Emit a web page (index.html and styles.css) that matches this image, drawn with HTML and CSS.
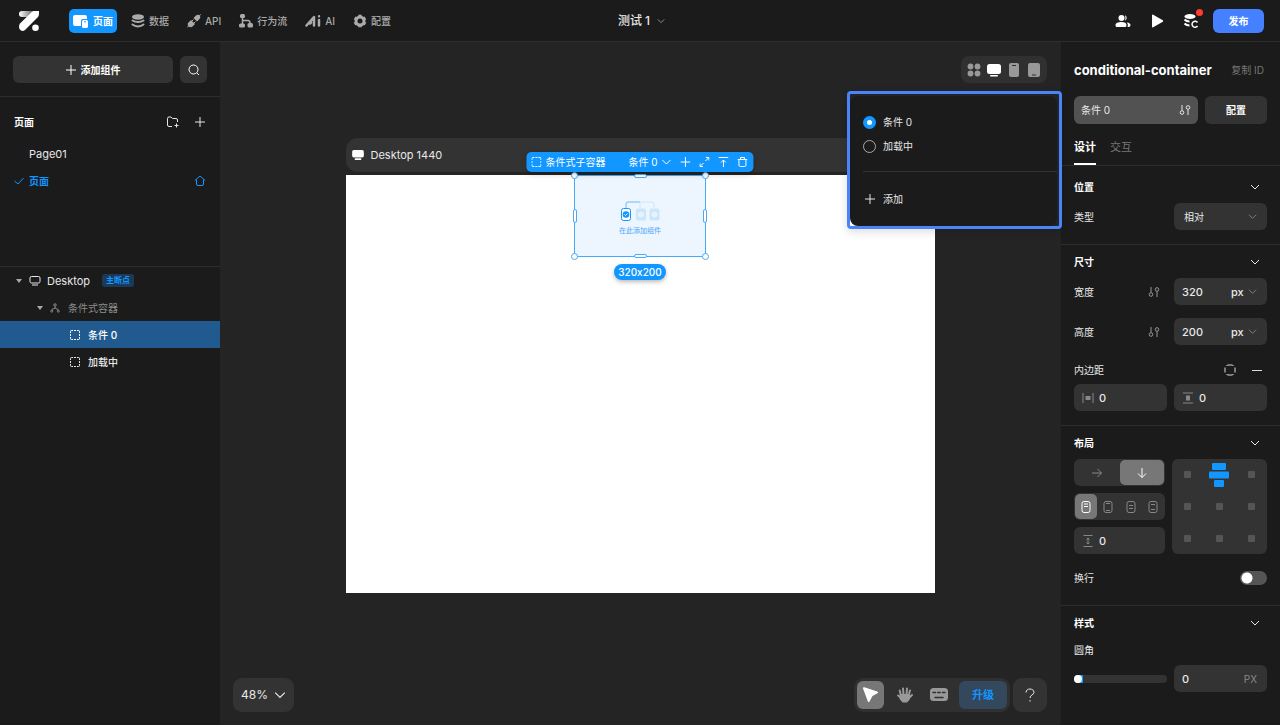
FILE: index.html
```html
<!DOCTYPE html>
<html lang="zh-CN">
<head>
<meta charset="utf-8">
<meta name="viewport" content="width=device-width, initial-scale=1">
<title>测试 1</title>
<link rel="stylesheet" href="styles.css">
</head>
<body>
<svg class="sprite" aria-hidden="true">
  <symbol id="chevron" viewBox="0 0 10 10"><path d="M1 3l4 4 4-4"/></symbol>
  <symbol id="plus" viewBox="0 0 10 10"><path d="M5 0v10M0 5h10"/></symbol>
  <symbol id="dashed" viewBox="0 0 10 10"><path d="M.5 3V1.5a1 1 0 0 1 1-1H3M4 .5h2M7 .5h1.500a1 1 0 0 1 1 1V3M9.500 4v2M9.500 7v1.500a1 1 0 0 1-1 1H7M6 9.500H4M3 9.500H1.500a1 1 0 0 1-1-1V7M.5 6V4"/></symbol>
  <symbol id="bind" viewBox="0 0 12 12"><path d="M3 1v5.500M9 11V5.500"/><circle cx="3" cy="8.500" r="1.800"/><circle cx="9" cy="3.500" r="1.800"/></symbol>
  <symbol id="monitor" viewBox="0 0 14 12"><rect x="0" y="0" width="14" height="9" rx="2"/><rect x="3" y="10" width="8" height="2" rx="1"/></symbol>
</svg>

<header class="topbar">
  <svg class="logo" viewBox="0 0 20 20" aria-label="Logo"><defs><linearGradient id="fade" gradientUnits="userSpaceOnUse" x1="0" y1="0" x2="14" y2="0"><stop offset="0" stop-color="#fff"/><stop offset="1" stop-color="#666"/></linearGradient></defs><rect width="18" height="6" rx="3" fill="url(#fade)"/><path d="M14.500 0H20v3q0 2-1.500 3.500L6 19q-2 1.500-4 .5T0 16t1-3.500L13 .800z" fill="#fff"/><circle cx="16.500" cy="16.700" r="3.300" fill="#fff"/></svg>
  <nav class="nav">
    <button class="nav-item active"><svg viewBox="0 0 16 14" width="16" height="14"><path d="M2 1h10a2 2 0 0 1 2 2v2h-4a2 2 0 0 0-2 2v5H2a2 2 0 0 1-2-2V3a2 2 0 0 1 2-2z" fill="#fff"/><rect x="9" y="6" width="6" height="8" rx="1.500" fill="#fff"/><path d="M11 7.800h2" stroke="#1296ff"/></svg>页面</button>
    <button class="nav-item"><svg viewBox="0 0 14 14" width="14" height="14"><ellipse cx="7" cy="3" rx="6" ry="2.700" fill="currentColor"/><path d="M1.500 6.500c3 2 8 2 11 0M1.500 10.500c3 2.500 8 2.500 11 0" fill="none" stroke="currentColor" stroke-width="2" stroke-linecap="round"/></svg>数据</button>
    <button class="nav-item"><svg viewBox="0 0 14 14" width="14" height="14" fill="currentColor"><path d="M1.500 8.500L4 6l4 4-2.500 2.500c-1 1-2.800.8-3.800 0L.5 13.500 0 13l1.300-1.200c-.8-1-.8-2.300.2-3.300zM6.500 4L9 1.500c1-1 2.500-.9 3.300-.2L13.500 0l.5.500-1.200 1.200c.7.800.7 2.300-.3 3.300L10 7.500z"/><path d="M5 7l1.500-1.500M7 9l1.500-1.500" stroke="currentColor"/></svg>API</button>
    <button class="nav-item"><svg viewBox="0 0 14 14" width="14" height="14" fill="currentColor"><rect x="1" y="0" width="5" height="4" rx="1.500"/><rect x="0" y="9.500" width="6" height="4" rx="1.500"/><rect x="8.500" y="9" width="5.500" height="4.500" rx="1.500"/><path d="M3.500 3v8M3.500 6.500h5.500q2 0 2 3" fill="none" stroke="currentColor" stroke-width="1.500"/></svg>行为流</button>
    <button class="nav-item"><svg viewBox="0 0 16 14" width="16" height="14" fill="none" stroke="currentColor" stroke-width="2.500" stroke-linecap="round" stroke-linejoin="round"><path d="M1.500 11.500L9 3v8.500M6 8.500l-1 1M14 6v5.500M14 2.200v.1"/></svg>AI</button>
    <button class="nav-item"><svg viewBox="0 0 14 14" width="14" height="14" fill="none" stroke="currentColor"><circle cx="7" cy="7" r="4" stroke-width="3"/><path d="M7 .8v3M7 10.200v3M1.600 3.900l2 1.200M12.400 3.900l-2 1.200M1.600 10.100l2-1.200M12.400 10.100l-2-1.200" stroke-width="3.400"/></svg>配置</button>
  </nav>
  <button class="project">测试 1<svg class="line" width="8" height="8"><use href="#chevron"/></svg></button>
  <div class="actions">
    <button class="icon-btn" aria-label="成员"><svg viewBox="0 0 16 14" width="16" height="14" fill="#fff"><circle cx="6.500" cy="4" r="3"/><path d="M10 1.300a3 3 0 0 1 0 5.400q1-2.700 0-5.400zM.5 11c0-2 2.500-3 6-3s5 1 5 3-1 2-2 2h-7c-1 0-2 0-2-2zM12 8.500q3.500.5 3.500 2.500t-2 2h-1q1-2 -.5-4.500z"/></svg></button>
    <button class="icon-btn" aria-label="预览"><svg viewBox="0 0 16 14" width="16" height="14" fill="#fff"><path d="M3 1.500q0-1.200 1.200-.8l9.600 5.500q1 .8 0 1.600L4.200 13.300q-1.200.4-1.200-.8z"/></svg></button>
    <button class="icon-btn sync" aria-label="同步"><svg viewBox="0 0 16 16" width="16" height="16" fill="none" stroke="#fff" stroke-width="2"><ellipse cx="7" cy="3.500" rx="5.500" ry="2.500" fill="#fff" stroke="none"/><path d="M1.500 6.500q2 2 5 2M1.500 10.500q2 2 5 2"/><path d="M14.500 9.500a3 3 0 1 0 0 3.500" stroke-width="1.500"/></svg><span class="dot"></span></button>
    <button class="publish">发布</button>
  </div>
</header>

<main class="workspace">
  <aside class="sidebar">
    <div class="add-row">
      <button class="add"><svg class="line" width="10" height="10"><use href="#plus"/></svg>添加组件</button>
      <button class="square" aria-label="搜索"><svg class="line" viewBox="0 0 12 12" width="12" height="12"><circle cx="5.500" cy="5.500" r="4.500"/><path d="M9 9l2 2"/></svg></button>
    </div>
    <section class="pages">
      <div class="pages-head"><h2>页面</h2>
        <button class="icon-btn" aria-label="新建文件夹"><svg class="line" viewBox="0 0 12 12" width="12" height="12"><path d="M5 10.500H2a1.500 1.500 0 0 1-1.500-1.500V2.500A1.500 1.500 0 0 1 2 1h2l1.500 1.500H9A1.500 1.500 0 0 1 10.500 4v2M9.500 7.500v4M7.500 9.500h4"/></svg></button>
        <button class="icon-btn" aria-label="新建页面"><svg class="line" width="10" height="10"><use href="#plus"/></svg></button>
      </div>
      <button class="page-item"><span class="mark"></span><span class="name">Page01</span></button>
      <button class="page-item current"><span class="mark"><svg class="line" viewBox="0 0 10 8" width="10" height="8"><path d="M.5 4L4 7l5.500-6"/></svg></span><span class="name">页面</span><svg class="line" viewBox="0 0 12 12" width="12" height="12"><path d="M.8 5.500L6 1l5.200 4.500M2.500 4.500V9A1.500 1.500 0 0 0 4 10.500h4A1.500 1.500 0 0 0 9.500 9V4.500"/></svg></button>
    </section>
    <section class="tree">
      <button class="node"><span class="caret"></span><svg class="line" viewBox="0 0 12 10" width="12" height="10"><rect x="1" y=".5" width="10" height="6.500" rx="1.500"/><path d="M3 9h6"/></svg><span class="label">Desktop</span><span class="tag">主断点</span></button>
      <button class="node level-1"><span class="caret"></span><svg class="line" viewBox="0 0 10 10" width="10" height="10"><circle cx="5" cy="2" r="1.200"/><path d="M5 3.500v1.500M2 7V6.500L5 5l3 1.500V7"/><circle cx="1.700" cy="8.200" r="1"/><circle cx="8.300" cy="8.200" r="1"/></svg><span>条件式容器</span></button>
      <button class="node level-2 selected"><svg class="line" width="10" height="10"><use href="#dashed"/></svg><span>条件 0</span></button>
      <button class="node level-2"><svg class="line" width="10" height="10"><use href="#dashed"/></svg><span>加载中</span></button>
    </section>
  </aside>

  <section class="canvas">
    <div class="devices">
      <button aria-label="全部"><svg viewBox="0 0 14 14" width="14" height="14" fill="currentColor"><circle cx="3.500" cy="3.500" r="2.900"/><circle cx="10.500" cy="3.500" r="2.900"/><circle cx="3.500" cy="10.500" r="2.900"/><circle cx="10.500" cy="10.500" r="2.900"/></svg></button>
      <button class="on" aria-label="桌面"><svg viewBox="0 0 14 14" width="14" height="14" fill="currentColor"><rect y="1" width="14" height="10" rx="2.500"/><rect x="3" y="12" width="8" height="1.500" rx=".7"/></svg></button>
      <button aria-label="手机"><svg viewBox="0 0 14 14" width="14" height="14"><rect x="2" y="0" width="10" height="14" rx="2" fill="currentColor"/><path d="M5 2.500h4" stroke="#303030"/></svg></button>
      <button aria-label="平板"><svg viewBox="0 0 14 14" width="14" height="14"><rect x="1" y="0" width="12" height="14" rx="2" fill="currentColor"/><path d="M5 12h4" stroke="#303030"/></svg></button>
    </div>

    <div class="frame">
      <div class="frame-label"><svg width="12" height="10" fill="#fff"><use href="#monitor"/></svg>Desktop 1440</div>
      <div class="artboard">
        <div class="component">
          <svg viewBox="0 0 40 20" width="40" height="20" fill="none"><path d="M6 7V3q0-2 2-2h12" stroke="#6cb8fa"/><path d="M20 1h12q2 0 2 2v4M20 1v6" stroke="#cbe5fb"/><rect x="1.500" y="7.500" width="9" height="12" rx="2" fill="#fff" stroke="#1296ff"/><circle cx="6" cy="13.500" r="3.300" fill="#1296ff"/><path d="M4.500 13.500l1 1 2-2" stroke="#fff"/><rect x="16" y="7.500" width="10" height="12" rx="2" fill="#cbe5fb"/><rect x="29.500" y="7.500" width="10" height="12" rx="2" fill="#cbe5fb"/><circle cx="21" cy="13.500" r="3" fill="#e6f2fd"/><circle cx="34.500" cy="13.500" r="3" fill="#e6f2fd"/></svg>
          <span class="hint">在此添加组件</span>
          <i class="corner tl"></i><i class="corner tr"></i><i class="corner bl"></i><i class="corner br"></i>
          <i class="grip top"></i><i class="grip bottom"></i><i class="grip left"></i><i class="grip right"></i>
          <div class="quickbar">
            <svg class="line" width="10" height="10"><use href="#dashed"/></svg><span class="quick-name">条件式子容器</span>
            <button class="quick-state">条件 0<svg class="line" width="10" height="10"><use href="#chevron"/></svg></button>
            <button aria-label="添加"><svg class="line" width="10" height="10"><use href="#plus"/></svg></button>
            <button aria-label="展开"><svg class="line" viewBox="0 0 10 10" width="10" height="10"><path d="M6 4l3.500-3.500M6.500.5h3v3M4 6L.5 9.500M.5 6.500v3h3"/></svg></button>
            <button aria-label="上移"><svg class="line" viewBox="0 0 10 10" width="10" height="10"><path d="M0 .5h10M5 10V3M2.500 5.500L5 3l2.500 2.500"/></svg></button>
            <button aria-label="删除"><svg class="line" viewBox="0 0 10 10" width="10" height="10"><path d="M0 2.500h10M3 2.500v-2h4v2M1.500 2.500V8q0 1.500 1.500 1.500h4q1.500 0 1.500-1.500V2.500"/></svg></button>
          </div>
          <span class="size">320x200</span>
        </div>
      </div>
    </div>

    <div class="bottom">
      <button class="zoom">48%<svg class="line" width="12" height="12"><use href="#chevron"/></svg></button>
      <div class="tools">
        <button class="tool on" aria-label="选择"><svg viewBox="0 0 18 18" width="18" height="18"><path d="M1 2.500Q.8 1 2.300 1.300l13 4.200q1.700.8.2 1.800L10.500 10 7.500 15.500q-1 1.500-1.700-.2z" fill="#fff"/></svg></button>
        <button class="tool" aria-label="抓手"><svg viewBox="0 0 18 18" width="18" height="18" fill="none" stroke="currentColor" stroke-width="2" stroke-linecap="round"><path d="M5 10L3.700 4.500M7.500 9L7 2.500M10.500 9L11 2.500M12.500 10L14 4.500M13.500 11.500L16 9M5.500 12L2 9.500"/><path d="M5 9h8v3.500q-1 2-2.500 3H7q-2-1.500-3-4z" fill="currentColor"/></svg></button>
        <button class="tool" aria-label="快捷键"><svg viewBox="0 0 18 14" width="18" height="14"><rect width="18" height="13" rx="3.500" fill="currentColor"/><path d="M3 4.500h2.500M7.700 4.500h2.500M12.500 4.500h2.500M5 9.500h8" stroke="#303030" stroke-width="1.500" stroke-linecap="round"/></svg></button>
        <button class="upgrade">升级</button>
      </div>
      <button class="help" aria-label="帮助"><svg class="line" viewBox="0 0 10 14" width="10" height="14"><path d="M1 4.500C1 2 3 1 5 1s4 1.200 4 3.300C9 7 5 6.800 5 10M5 12v1.500"/></svg></button>
    </div>

    <div class="spotlight">
      <div class="menu">
        <label><input type="radio" name="state" checked>条件 0</label>
        <label><input type="radio" name="state">加载中</label>
        <hr>
        <button class="menu-add"><svg class="line" width="10" height="10"><use href="#plus"/></svg>添加</button>
      </div>
    </div>
  </section>

  <aside class="inspector">
    <div class="head">
      <div class="title-row"><h1>conditional-container</h1><button>复制 ID</button></div>
      <div class="config-row"><button class="condition">条件 0<svg class="line" width="12" height="12"><use href="#bind"/></svg></button><button class="configure">配置</button></div>
      <div class="tabs"><button class="active">设计</button><button>交互</button></div>
    </div>

    <section class="group">
      <div class="group-head"><h2>位置</h2><svg class="line" width="10" height="10"><use href="#chevron"/></svg></div>
      <div class="field-row"><label for="type">类型</label><div class="field pick"><select id="type"><option>相对</option></select><svg class="line" width="9" height="9"><use href="#chevron"/></svg></div></div>
    </section>

    <section class="group">
      <div class="group-head"><h2>尺寸</h2><svg class="line" width="10" height="10"><use href="#chevron"/></svg></div>
      <div class="field-row"><label for="w">宽度</label><svg class="line bind" width="12" height="12"><use href="#bind"/></svg><div class="field"><input id="w" type="text" value="320"><select aria-label="宽度单位"><option>px</option></select><svg class="line" width="9" height="9"><use href="#chevron"/></svg></div></div>
      <div class="field-row spaced"><label for="h">高度</label><svg class="line bind" width="12" height="12"><use href="#bind"/></svg><div class="field"><input id="h" type="text" value="200"><select aria-label="高度单位"><option>px</option></select><svg class="line" width="9" height="9"><use href="#chevron"/></svg></div></div>
      <div class="pad-head"><span>内边距</span>
        <button class="icon-btn" aria-label="四边"><svg class="line" viewBox="0 0 12 12" width="12" height="12"><path d="M3.500 1h5M3.500 11h5M1 3.500v5M11 3.500v5M3.500 1L2.500 2M8.500 1l1 1M3.500 11l-1-1M8.500 11l1-1"/></svg></button>
        <button class="icon-btn" aria-label="移除"><svg class="line" viewBox="0 0 10 10" width="10" height="10"><path d="M0 5.500h10"/></svg></button></div>
      <div class="pair">
        <div class="field lead"><svg class="line" viewBox="0 0 12 12" width="12" height="12"><path d="M1 1v10M11 1v10"/><rect x="4" y="4.500" width="4" height="3" fill="currentColor"/></svg><input type="text" value="0" aria-label="水平内边距"></div>
        <div class="field lead"><svg class="line" viewBox="0 0 12 12" width="12" height="12"><path d="M1 1h10M1 11h10"/><rect x="4.500" y="4" width="3" height="4" fill="currentColor"/></svg><input type="text" value="0" aria-label="垂直内边距"></div>
      </div>
    </section>

    <section class="group">
      <div class="group-head"><h2>布局</h2><svg class="line" width="10" height="10"><use href="#chevron"/></svg></div>
      <div class="layout">
        <div class="layout-left">
          <div class="segment direction">
            <button aria-label="横向"><svg class="line" viewBox="0 0 10 10" width="10" height="10"><path d="M0 5h9.500M5.500 1l4 4-4 4"/></svg></button>
            <button class="on" aria-label="纵向"><svg class="line" viewBox="0 0 10 10" width="10" height="10"><path d="M5 0v9.500M1 5.500l4 4 4-4"/></svg></button>
          </div>
          <div class="segment spread">
            <button class="on" aria-label="顶部"><svg class="line" viewBox="0 0 10 12" width="10" height="12"><rect x="1" y=".5" width="8" height="11" rx="2"/><path d="M3 3h4M3 5.500h4"/></svg></button>
            <button aria-label="两端"><svg class="line" viewBox="0 0 10 12" width="10" height="12"><rect x="1" y=".5" width="8" height="11" rx="2"/><path d="M3 2.500h4M3 9.500h4"/></svg></button>
            <button aria-label="环绕"><svg class="line" viewBox="0 0 10 12" width="10" height="12"><rect x="1" y=".5" width="8" height="11" rx="2"/><path d="M3 4.500h4M3 7.500h4"/></svg></button>
            <button aria-label="均匀"><svg class="line" viewBox="0 0 10 12" width="10" height="12"><rect x="1" y=".5" width="8" height="11" rx="2"/><path d="M3 3.500h4M3 8.500h4"/></svg></button>
          </div>
          <div class="field lead"><svg class="line" viewBox="0 0 12 12" width="12" height="12"><path d="M1.500.5h9M1.500 11.500h9M6 3v6M4.500 4.500L6 3l1.500 1.500M4.500 7.500L6 9l1.500-1.500"/></svg><input type="text" value="0" aria-label="间距"></div>
        </div>
        <div class="matrix">
          <button aria-label="左上"><i></i></button>
          <button aria-label="上"><svg viewBox="0 0 20 24" width="20" height="24" fill="#1296ff"><rect x="3" y="0" width="14" height="7" rx="1"/><rect x="0" y="8.500" width="20" height="7" rx="1"/><rect x="5" y="17" width="10" height="7" rx="1"/></svg></button>
          <button aria-label="右上"><i></i></button>
          <button aria-label="左"><i></i></button><button aria-label="中"><i></i></button><button aria-label="右"><i></i></button>
          <button aria-label="左下"><i></i></button><button aria-label="下"><i></i></button><button aria-label="右下"><i></i></button>
        </div>
      </div>
      <div class="wrap-row"><label for="wrap">换行</label><input id="wrap" class="switch" type="checkbox" role="switch"></div>
    </section>

    <section class="group last">
      <div class="group-head"><h2>样式</h2><svg class="line" width="10" height="10"><use href="#chevron"/></svg></div>
      <label class="radius-label" for="radius">圆角</label>
      <div class="pair">
        <input class="slider" type="range" min="0" max="100" value="0" aria-label="圆角滑块">
        <div class="field"><input id="radius" type="text" value="0"><span class="unit">PX</span></div>
      </div>
    </section>
  </aside>
</main>
</body>
</html>
```
FILE: styles.css
```css
* { box-sizing: border-box; }
body {
  margin: 0;
  min-height: 100vh;
  display: flex;
  flex-direction: column;
  background: #242424;
  color: #e8e8e8;
  font: 10px/16px Inter, "Noto Sans CJK SC", sans-serif;
  font-feature-settings: "calt" 0;
}
button, input, select { font: inherit; font-feature-settings: inherit; color: inherit; }
button {
  display: flex;
  align-items: center;
  justify-content: center;
  margin: 0;
  padding: 0;
  border: 0;
  background: none;
  white-space: nowrap;
  cursor: pointer;
}
svg { display: block; flex: none; }
h1, h2 { margin: 0; font-size: 10px; font-weight: 700; color: #fff; }
.sprite { position: absolute; width: 0; height: 0; }
.line { fill: none; stroke: currentColor; stroke-width: 1; }
.icon-btn { width: 16px; height: 16px; }

/* Top bar */
.topbar {
  display: grid;
  grid-template-columns: 1fr auto 1fr;
  align-items: center;
  height: 42px;
  padding: 0 16px 0 19px;
  background: #1b1b1b;
  border-bottom: 1px solid #2e2e2e;
}
.logo { width: 20px; height: 20px; grid-area: 1 / 1; }
.nav { grid-area: 1 / 1; display: flex; gap: 10px; margin-left: 50px; }
.nav-item { gap: 4px; height: 24px; padding: 0 4px; border-radius: 5px; color: #aaa; font-weight: 500; }
.nav-item.active { background: #1296ff; color: #fff; font-weight: 700; }
.project { grid-column: 2; gap: 7px; font-size: 12px; font-weight: 500; }
.project svg { color: #aaa; }
.actions { display: flex; justify-content: flex-end; align-items: center; gap: 18px; }
.sync { position: relative; }
.dot { position: absolute; top: -4px; right: -4px; width: 7px; height: 7px; border-radius: 50%; background: #ff3b30; }
.publish { width: 51px; height: 24px; margin-left: -4px; border-radius: 6px; background: #4480ff; color: #fff; font-weight: 600; }

.workspace { flex: 1; display: flex; }

/* Left sidebar */
.sidebar { width: 220px; flex: none; background: #1b1b1b; }
.add-row { display: flex; gap: 7px; padding: 14px 13px 13px; border-bottom: 1px solid #2e2e2e; }
.add, .square, .configure { height: 27px; border-radius: 6px; background: #333; color: #fff; }
.add { flex: 1; gap: 5px; font-weight: 700; }
.square { width: 27px; }
.pages { min-height: 170px; padding: 11px 13px 0 14px; border-bottom: 1px solid #2e2e2e; }
.pages-head { display: flex; align-items: center; gap: 11px; height: 27px; margin-bottom: 5px; }
.pages-head h2 { margin-right: auto; }
.pages-head .icon-btn:last-child { margin-right: -1px; }
.page-item { width: 100%; height: 27px; gap: 4px; padding-right: 1px; }
.mark { width: 11px; }
.name { flex: 1; text-align: left; font-size: 11px; }
.current { color: #1296ff; font-weight: 700; }
.current .name { font-size: 10px; }
.node { width: 100%; height: 27px; padding-left: 16px; justify-content: flex-start; gap: 8px; }
.node .label { font-size: 11px; }
.caret { border: 3px solid transparent; border-top: 4px solid #aaa; border-bottom: 0; }
.node .caret + svg { margin-left: -1px; }
.node:not(.level-1) > .label { margin-left: -2px; }
.tag { height: 13px; margin-left: 4px; padding: 0 4px; border-radius: 3px; background: #1b3a57; color: #1296ff; font-size: 8px; line-height: 13px; font-weight: 700; }
.level-1 { padding-left: 37px; color: #8c8c8c; }
.level-2 { padding-left: 70px; font-weight: 500; }
.selected { background: #215a8f; color: #fff; }

/* Canvas */
.canvas { position: relative; flex: 1; min-width: 0; display: flex; flex-direction: column; padding: 14px 13px 13px; }
.devices { align-self: flex-end; display: flex; align-items: center; gap: 6px; height: 27px; padding: 0 6px; border-radius: 8px; background: #303030; color: #999; }
.devices .on { color: #fff; }
.frame { width: 589px; max-width: 100%; margin: 55px auto 0; }
.frame-label { display: flex; align-items: center; gap: 7px; height: 34px; margin-bottom: 3px; padding: 0 6px; border-radius: 12px; background: #333; font-size: 11px; }
.artboard { display: flex; justify-content: center; align-items: flex-start; aspect-ratio: 589 / 418; background: #fff; }
.component {
  position: relative;
  display: flex;
  flex-direction: column;
  align-items: center;
  justify-content: center;
  gap: 5px;
  width: 132px;
  height: 82px;
  border: 1px solid #48a9f8;
  background: #edf5fe;
}
.hint { color: #48a9f8; font-size: 7px; line-height: 10px; }
.component > .hint { margin-bottom: -4px; }
.corner, .grip { position: absolute; border: 1px solid #48a9f8; background: #fff; }
.corner { width: 7px; height: 7px; border-radius: 50%; }
.tl, .tr { top: -4px; }
.bl, .br { bottom: -4px; }
.tl, .bl { left: -4px; }
.tr, .br { right: -4px; }
.grip { border-radius: 2px; }
.grip.top, .grip.bottom { left: 59px; width: 13px; height: 4px; }
.grip.top { top: -2px; }
.grip.bottom { bottom: -2px; }
.left, .right { top: 33px; width: 4px; height: 14px; }
.left { left: -2px; }
.right { right: -2px; }
.quickbar {
  position: absolute;
  bottom: 84px;
  left: 50%;
  transform: translateX(-50%);
  display: flex;
  align-items: center;
  gap: 9px;
  height: 20px;
  padding: 0 6px 0 5px;
  border-radius: 5px;
  background: #1296ff;
  color: #fff;
  white-space: nowrap;
  box-shadow: 0 2px 6px #0003;
}
.quick-name { margin: 0 14px 0 -5px; }
.quick-state { gap: 4px; }
.size { position: absolute; top: 88px; padding: 0 4px; border-radius: 8px; background: #1296ff; color: #fff; font-weight: 500; box-shadow: 0 2px 4px #0004; }

.canvas > .bottom { display: flex; align-items: center; gap: 3px; margin-top: auto; }
.zoom { gap: 6px; width: 61px; height: 34px; margin-right: auto; border-radius: 9px; background: #333; font-size: 12px; }
.tools { display: flex; gap: 7px; padding: 3px; border-radius: 9px; background: #303030; color: #999; }
.tool { width: 27px; height: 28px; border-radius: 6px; }
.tool.on { background: #777; }
.upgrade { width: 48px; border-radius: 6px; background: #33475d; color: #1296ff; font-size: 11px; font-weight: 700; }
.help { width: 34px; height: 34px; border-radius: 9px; background: #333; }

/* Condition menu, floating over the canvas edge */
.spotlight { position: absolute; z-index: 2; top: 49px; right: -2px; width: 215px; padding: 2px 2px 0 0; border: 3px solid #4a84fb; border-radius: 4px; box-shadow: 0 3px 8px #0002; }
.menu { display: flex; flex-direction: column; padding: 14px 0 13px 13px; border-radius: 8px; background: #1b1b1b; }
.menu label { display: flex; align-items: center; gap: 7px; height: 24px; }
.menu input { appearance: none; width: 13px; height: 13px; margin: 0; border: 1px solid #aaa; border-radius: 50%; }
.menu input:checked { border: 4px solid #1296ff; background: #fff; }
.menu hr { width: 100%; height: 1px; margin: 13px 0; border: 0; background: #333; }
.menu-add { justify-content: flex-start; gap: 8px; height: 28px; padding-left: 2px; }

/* Inspector */
.inspector { width: 220px; flex: none; background: #1b1b1b; border-left: 1px solid #222; }
.head { padding: 14px 13px 0; border-bottom: 1px solid #2e2e2e; }
.title-row { display: flex; align-items: center; justify-content: space-between; height: 27px; padding-right: 3px; }
.title-row h1 { font-size: 13px; font-weight: 700; }
.title-row button { color: #777; }
.config-row { display: grid; grid-template-columns: 2fr 1fr; gap: 7px; margin: 13px 0 14px; }
.condition { height: 28px; padding: 0 7px; justify-content: space-between; border-radius: 6px; background: #525252; }
.configure { height: 28px; font-weight: 700; }
.tabs { display: flex; gap: 14px; }
.tabs button { height: 27px; padding-bottom: 7px; border-bottom: 2px solid transparent; color: #777; font-size: 11px; }
.tabs .active { border-color: #fff; color: #fff; font-weight: 700; }
.group { padding: 8px 13px 14px; border-bottom: 1px solid #2e2e2e; }
.head + .group { padding-top: 12px; }
.group.last { border-bottom: 0; }
.group-head, .pad-head, .wrap-row { display: flex; align-items: center; justify-content: space-between; height: 17px; }
.group-head { margin-bottom: 8px; padding-right: 7px; }
.field-row { display: flex; align-items: center; justify-content: space-between; }
.field-row.spaced { margin-top: 13px; }
.field-row .field { width: 93px; }
.bind { margin: 0 14px 0 auto; color: #999; }
.field { display: flex; align-items: center; height: 27px; min-width: 0; padding: 0 10px 0 8px; border-radius: 6px; background: #333; }
.field input { width: 0; flex: 1; min-width: 0; padding: 0; border: 0; outline: 0; background: none; font-size: 11px; font-weight: 500; }
.field select { appearance: none; padding: 0; border: 0; outline: 0; background: none; font-size: 11px; font-weight: 500; }
.field > svg { margin-left: 4px; color: #888; }
.pick select { flex: 1; padding-left: 2px; font-size: 10px; font-weight: 400; }
.lead > svg { margin: 0 5px 0 0; }
.pad-head { margin: 16px 0 6px; justify-content: flex-end; gap: 11px; padding-right: 2px; }
.pad-head .icon-btn { color: #ddd; }
.pad-head span { margin-right: auto; }
.pair { display: grid; grid-template-columns: 1fr 1fr; align-items: center; gap: 7px; }
.layout { display: grid; grid-template-columns: 1fr 95px; gap: 7px; }
.layout-left { display: flex; flex-direction: column; gap: 7px; }
.segment { display: flex; height: 27px; padding: 1px; border-radius: 6px; background: #333; color: #888; }
.segment button { flex: 1; border-radius: 5px; }
.segment .on { background: #777; color: #fff; }
.matrix { display: grid; grid-template: repeat(3, 1fr) / repeat(3, 1fr); border-radius: 6px; background: #333; }
.matrix i { width: 7px; height: 7px; border-radius: 1px; background: #555; }
.wrap-row { margin: 15px 0 5px; }
.switch { appearance: none; width: 27px; height: 14px; margin: 0; border-radius: 7px; background: radial-gradient(circle at 7px 7px, #fff 5px, #555 6px); }
.radius-label { display: block; padding-top: 3px; margin-bottom: 7px; }
.slider { appearance: none; width: 100%; height: 8px; margin: 0; border-radius: 4px; background: linear-gradient(90deg, #1296ff 9px, #333 9px); }
.slider::-webkit-slider-thumb { appearance: none; width: 8px; height: 8px; border-radius: 50%; background: #fff; }
.unit { color: #888; }
```
